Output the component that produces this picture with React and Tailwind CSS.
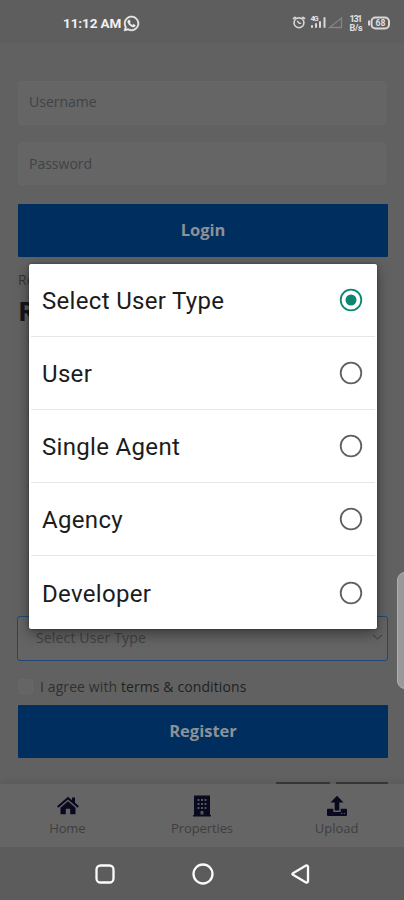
import { useState } from "react";
import { FaWhatsapp } from "react-icons/fa";
import clsx from "clsx";

const userTypes = ["Select User Type", "User", "Single Agent", "Agency", "Developer"];

function StatusBar() {
  return (
    <div className="flex h-[43px] shrink-0 items-center bg-[#5e5e5e] pt-[3px] pl-[63px] pr-[13px] font-[Roboto,sans-serif] text-[#f0f0f0]">
      <span className="w-[59px] whitespace-nowrap text-[13.5px] font-bold tracking-[-0.1px]">11:12 AM</span>
      <FaWhatsapp className="ml-px size-[17px] shrink-0" stroke="currentColor" strokeWidth="18" />

      <svg className="ml-auto" width="99" height="18" viewBox="0 0 99 18" fill="none" stroke="#d8d8d8">
        {/* Alarm */}
        <path d="M2.5 3.5 1 5M11.5 3.5 13 5" strokeWidth="1.6" />
        <path d="M2 3.6h2.3M9.7 3.6H12" strokeWidth="1.6" />
        <circle cx="7" cy="8.8" r="4.9" strokeWidth="1.6" />
        <path d="M5.2 7 7.3 9.3h1.9" strokeWidth="1.3" />
        {/* Signal */}
        <text x="18.5" y="6.5" fill="#e0e0e0" stroke="none" fontSize="7.5" fontWeight="700" fontFamily="Roboto, sans-serif" textLength="8">4G</text>
        <path d="M20 13.8v-2.6M24 13.8v-4.500M28 13.8v-6.500M32.500 13.8V3.300" strokeWidth="2" />
        <path d="M37.500 13.500H49.500V4Z" stroke="#858585" strokeWidth="1.300" />
        {/* Network speed */}
        <g fill="#e0e0e0" stroke="none" fontSize="9" fontWeight="700" fontFamily="Roboto, sans-serif">
          <text x="57.500" y="7.500" textLength="13">131</text>
          <text x="57.500" y="16.500" textLength="13">B/s</text>
        </g>
        {/* Battery */}
        <path d="M77 6.500v5" strokeWidth="2" />
        <rect x="79.500" y="3.500" width="17.500" height="11" rx="4" strokeWidth="2" />
        <text x="83.500" y="12.200" fill="#e0e0e0" stroke="none" fontSize="8.500" fontWeight="700" fontFamily="Roboto, sans-serif" textLength="10">68</text>
      </svg>
    </div>
  );
}

function Field({ label, className }) {
  return (
    <div
      className={clsx(
        "flex w-[368px] items-center rounded-[3px] border border-[#676767] bg-[#656565] pl-[10px] text-[14px] text-[#404347]",
        className
      )}
    >
      {label}
    </div>
  );
}

function SubmitButton({ children, className }) {
  return (
    <button
      className={clsx(
        "block h-[53px] w-[370px] rounded-[1px] bg-[#002f5f] text-[16.5px] font-bold text-[#8c9197]",
        className
      )}
    >
      {children}
    </button>
  );
}

function AuthForms() {
  return (
    <div className="flex h-[741px] shrink-0 flex-col overflow-hidden pt-[38px] pl-[18px]">
      <Field label="Username" className="h-[44px] shrink-0 pb-[3px]" />
      <Field label="Password" className="mt-[17px] h-[43px] shrink-0" />
      <SubmitButton className="mt-[19px] shrink-0">Login</SubmitButton>

      <p className="mt-[12px] h-[21px] shrink-0 text-[14px] leading-[21px] text-[#343434]">Re</p>
      <h2 className="mt-[4px] h-[34px] shrink-0 text-[27px] leading-[34px] font-bold text-[#161616]">R</h2>

      <div className="mt-auto -ml-px flex h-[45px] w-[371px] shrink-0 items-center justify-between rounded-[3px] border border-[#214875] bg-[#646464] pr-[4px] pb-[2px] pl-[18px] text-[14px] text-[#414141]">
        <span className="whitespace-nowrap tracking-[0.15px]">Select User Type</span>
        <svg width="11" height="7" viewBox="0 0 11 7" fill="none" stroke="#393939">
          <path d="m1 1 4.5 4L10 1" />
        </svg>
      </div>

      <label className="mt-[15px] flex h-[20px] shrink-0 items-center text-[14px] tracking-[0.1px] whitespace-nowrap text-[#303030]">
        <span className="mr-[7px] size-[15px] rounded-[3px] border border-[#686868] bg-[#656565]" />
        <span>
          I agree with <span className="text-[#1f1f1f]">terms &amp; conditions</span>
        </span>
      </label>
      <SubmitButton className="mt-[9px] shrink-0">Register</SubmitButton>

      <div className="mt-[24px] mr-[16px] flex h-[2px] shrink-0 justify-end gap-[6px]">
        <span className="w-[54px] bg-[#383838]" />
        <span className="w-[52px] bg-[#383838]" />
      </div>
    </div>
  );
}

function BottomNav() {
  return (
    <nav className="grid h-[63px] shrink-0 grid-cols-3 bg-[#656565] pt-[11px] text-[13px] text-[#3f3f3f] shadow-[0_-2px_8px_rgba(0,0,0,0.08)]">
      <div className="flex flex-col items-center">
        <svg className="ml-px" width="24" height="22" viewBox="0 0 24 22" fill="#09091f">
          <path d="M1 11.2 12 1.8l4 3.4V2.4h3v5.4l4 3.4-1.4 1.6L12 4.6l-9.6 8.2Z" />
          <path d="m12 6.3 7.5 6.4v6.5h-5.3v-5.4H9.8v5.4H4.500v-6.500Z" />
        </svg>
        <span className="leading-[22px] tracking-[-0.1px]">Home</span>
      </div>
      <div className="flex flex-col items-center">
        <svg width="20" height="22" viewBox="0 0 20 22">
          <path d="M2 .5h16v19.500h1v1.500H1V20h1Z" fill="#09091f" />
          <path d="M5.500 4h2v2h-2zm3.500 0h2v2H9zm3.500 0h2v2h-2zm-7 4h2v2h-2zM9 8h2v2H9zm3.500 0h2v2h-2zm-7 4h2v2h-2zm3.500 0h2v2H9zm3.500 0h2v2h-2zM8.500 16h3v3.500h-3z" fill="#55555c" />
        </svg>
        <span className="leading-[22px] tracking-[-0.1px]">Properties</span>
      </div>
      <div className="flex flex-col items-center">
        <svg className="ml-px" width="22" height="22" viewBox="0 0 22 22" fill="#09091f">
          <path d="M11 .8 17.500 7.600h-4.200v7.900H8.700V7.600H4.500Z" />
          <path d="M2 13.800h5.300V17h7.400v-3.200H20a1 1 0 0 1 1 1V20a1 1 0 0 1-1 1H2a1 1 0 0 1-1-1v-5.200a1 1 0 0 1 1-1Z" />
          <path d="M15 18.500h1.300M17.700 18.500H19" stroke="#55555c" />
        </svg>
        <span className="leading-[22px]">Upload</span>
      </div>
    </nav>
  );
}

function SystemBar() {
  return (
    <div className="flex h-[53px] shrink-0 items-center justify-between bg-[#5c5c5c] pr-[92px] pl-[94px]">
      <svg width="22" height="22" viewBox="0 0 22 22" fill="none" stroke="#fafafa" strokeWidth="2.300">
        <rect x="2.500" y="2.500" width="17" height="17" rx="4" />
      </svg>
      <svg width="24" height="24" viewBox="0 0 24 24" fill="none" stroke="#fafafa" strokeWidth="2.300">
        <circle cx="12" cy="12" r="9.500" />
      </svg>
      <svg width="22" height="22" viewBox="0 0 22 22" fill="none" stroke="#fafafa" strokeWidth="2.300" strokeLinejoin="round">
        <path d="M3 10.200 16 2.600Q18 2 18 4v14q0 2-2 1.400L3 11.800Q1.800 11 3 10.200Z" />
      </svg>
    </div>
  );
}

function UserTypeDialog() {
  const [selected, setSelected] = useState(userTypes[0]);

  return (
    <div className="absolute top-[264px] left-[28.5px] h-[365px] w-[348px] rounded-[2px] bg-white shadow-[0_5px_14px_rgba(0,0,0,0.4),0_0_3px_rgba(0,0,0,0.4)]">
      {userTypes.map((type, i) => (
        <div
          key={type}
          onClick={() => setSelected(type)}
          className={clsx(
            "mx-[2px] flex h-[73px] items-center justify-between pr-[12px] pl-[11.5px]",
            i < userTypes.length - 1 && "border-b border-[#e6e6e6]"
          )}
        >
          <span className="pt-[2px] font-[Roboto,sans-serif] text-[24px] tracking-[0.32px] whitespace-nowrap text-[#1c1c1c]">{type}</span>
          <svg
            width="24"
            height="24"
            viewBox="0 0 24 24"
            fill="none"
            stroke={selected === type ? "#0c8571" : "#606060"}
            strokeWidth="1.800"
          >
            <circle cx="12" cy="12" r="10.300" />
            {selected === type && <circle cx="12" cy="12" r="5.500" fill="#0c8571" stroke="none" />}
          </svg>
        </div>
      ))}
    </div>
  );
}

function App() {
  return (
    <div className="relative flex h-[900px] w-[404px] flex-col overflow-hidden bg-[#616161] font-['Open_Sans',sans-serif]">
      <StatusBar />
      <AuthForms />
      <BottomNav />
      <SystemBar />
      <UserTypeDialog />

      {/* Edge panel handle */}
      <div className="absolute top-[572px] left-[397px] h-[117px] w-[14px] rounded-l-[8px] border border-[#b0b0b0] bg-[#999999]" />
    </div>
  );
}

export default App;
